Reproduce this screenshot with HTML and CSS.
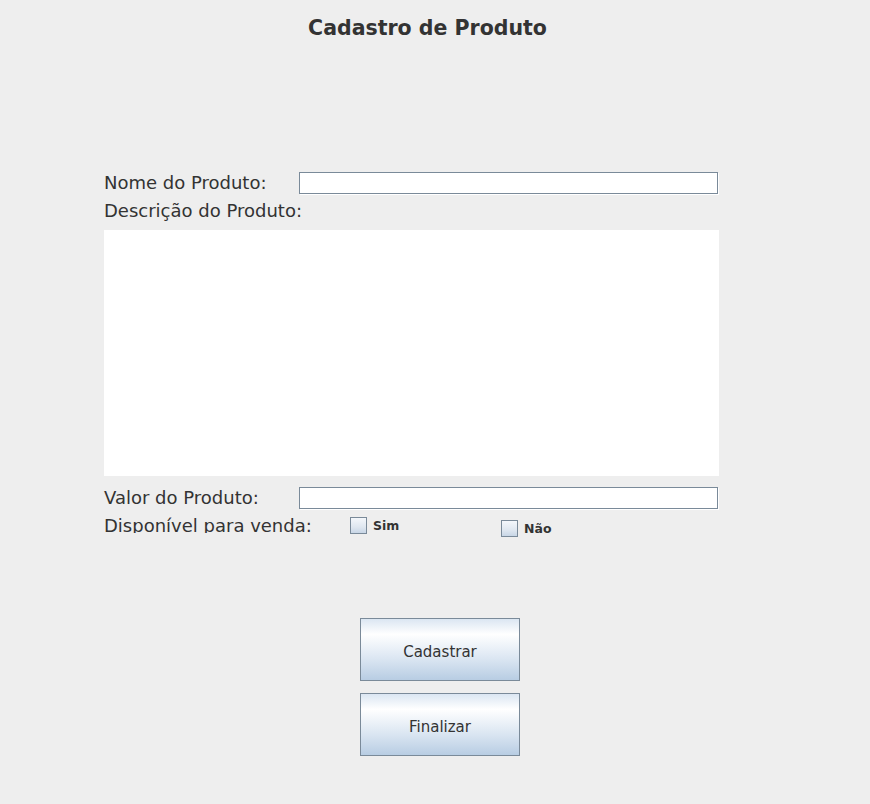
FILE: index.html
```html
<!DOCTYPE html>
<html lang="pt">
<head>
<meta charset="utf-8">
<title>Cadastro de Produto</title>
<link rel="stylesheet" href="styles.css">
</head>
<body>
<div class="window">
  <h1 class="title">Cadastro de Produto</h1>
  <form class="form">
    <div class="row">
      <label class="label">Nome do Produto:</label>
      <input class="field" type="text">
    </div>
    <div class="label desc-label">Descrição do Produto:</div>
    <textarea class="area"></textarea>
    <div class="row row-valor">
      <label class="label">Valor do Produto:</label>
      <input class="field" type="text">
    </div>
    <div class="row-disp">
      <span class="label disp-label">Disponível para venda:</span>
      <span class="check check-sim"><span class="box"></span><span class="check-text">Sim</span></span>
      <span class="check check-nao"><span class="box"></span><span class="check-text">Não</span></span>
    </div>
  </form>
  <div class="buttons">
    <button class="btn" type="button">Cadastrar</button>
    <button class="btn" type="button">Finalizar</button>
  </div>
</div>
</body>
</html>
```
FILE: styles.css
```css
html, body {
  margin: 0;
  padding: 0;
  background: #eeeeee;
}
body {
  width: 870px;
  height: 804px;
  overflow: hidden;
  font-family: "DejaVu Sans", Verdana, sans-serif;
  color: #333333;
}
.window {
  display: flex;
  flex-direction: column;
}
.title {
  margin: 14px 0 0 0;
  width: 855px;
  text-align: center;
  font-size: 20.5px;
  font-weight: bold;
  line-height: 28px;
  color: #333333;
}
.form {
  margin: 130px 0 0 104px;
  display: flex;
  flex-direction: column;
  width: 616px;
}
.row {
  display: flex;
  align-items: center;
  height: 22px;
}
.label {
  font-size: 18px;
  line-height: 22px;
  color: #333333;
  white-space: nowrap;
}
.row .label {
  width: 195px;
  flex: none;
}
.field {
  box-sizing: border-box;
  width: 419px;
  height: 22px;
  margin: 0;
  padding: 0 3px;
  border: 1px solid #7a8a99;
  background: #ffffff;
  box-shadow: 1px 1px 0 #ffffff;
  font: inherit;
  outline: none;
}
.desc-label {
  margin-top: 6px;
}
.area {
  box-sizing: border-box;
  margin: 8px 0 0 0;
  width: 615px;
  height: 246px;
  border: none;
  background: #ffffff;
  resize: none;
  outline: none;
  padding: 0;
}
.row-valor {
  margin-top: 11px;
}
.row-disp {
  position: relative;
  height: 20px;
  margin-top: 6px;
  overflow: visible;
}
.disp-label {
  display: block;
  height: 18px;
  overflow: hidden;
  line-height: 22px;
}
.check {
  position: absolute;
  display: flex;
  align-items: center;
  gap: 6px;
}
.check-sim { left: 246px; top: 2px; }
.check-nao { left: 397px; top: 5px; }
.box {
  box-sizing: border-box;
  width: 17px;
  height: 17px;
  border: 1px solid #7a8a99;
  background: linear-gradient(to bottom, #f4f7fb 0%, #dfe7f0 60%, #c8d6e6 100%);
}
.check-text {
  font-size: 12.5px;
  font-weight: bold;
  color: #333333;
}
.buttons {
  margin: 83px 0 0 360px;
  display: flex;
  flex-direction: column;
  gap: 12px;
}
.btn {
  box-sizing: border-box;
  width: 160px;
  height: 63px;
  margin: 0;
  padding: 5px 0 0 0;
  border: 1px solid #7a8a99;
  border-radius: 0;
  background: linear-gradient(to bottom, #dbe6f2 0%, #ffffff 25%, #dbe6f2 65%, #b8cde3 100%);
  font-family: "DejaVu Sans", Verdana, sans-serif;
  font-size: 15px;
  color: #333333;
  cursor: default;
}
```
